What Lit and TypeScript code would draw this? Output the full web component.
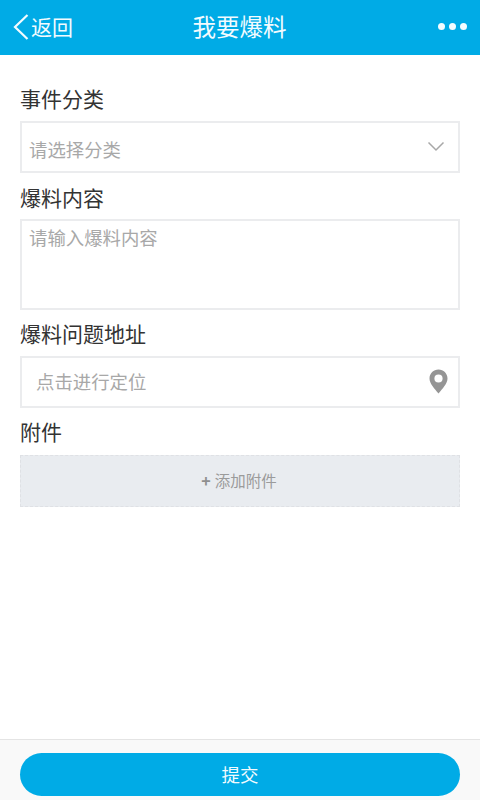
import { LitElement, html, css } from "lit";
import { customElement } from "lit/decorators.js";

@customElement("app-root")
export class AppRoot extends LitElement {
  static styles = css`
    :host {
      display: flex;
      flex-direction: column;
      width: 480px;
      height: 800px;
      background: #fff;
      font-family: "Noto Sans CJK SC", "Noto Sans", sans-serif;
      overflow: hidden;
    }
    .header {
      height: 55px;
      flex: none;
      background: #00abe6;
      color: #f2fbff;
      display: grid;
      grid-template-columns: 1fr auto 1fr;
      align-items: center;
      padding: 0 13px 3px 13px;
      box-sizing: border-box;
    }
    .back {
      display: flex;
      align-items: center;
      font-size: 21px;
      line-height: 28px;
      gap: 1px;
    }
    .back svg { display: block; margin-top: 1px; }
    .title { font-size: 23.5px; line-height: 32px; margin-left: -1px; }
    .more {
      justify-self: end;
      display: flex;
      gap: 4px;
    }
    .more i {
      width: 7px;
      height: 7px;
      border-radius: 50%;
      background: #f4fcff;
    }
    .form {
      flex: 1;
      display: flex;
      flex-direction: column;
      padding: 29px 20px 0;
    }
    .label {
      font-size: 21px;
      line-height: 28px;
      color: #333;
    }
    .label.l1 { margin-bottom: 9px; }
    .label.l2 { margin-top: 10px; margin-bottom: 8px; }
    .label.l3 { margin-top: 9px; margin-bottom: 9px; }
    .label.l4 { margin-top: 9px; margin-bottom: 10px; }
    .box {
      box-sizing: border-box;
      border: 2px solid #ebecee;
      height: 52px;
      display: flex;
      align-items: center;
      justify-content: space-between;
      font-size: 18.4px;
      line-height: 26px;
      color: #a8a8a8;
    }
    .select { padding: 3px 13px 0 7px; }
    .select svg { margin-top: -5px; }
    .area {
      height: 91px;
      align-items: flex-start;
      padding: 3px 7px;
    }
    .loc { padding: 0 10px 2px 14px; }
    .attach {
      box-sizing: border-box;
      height: 52px;
      background: #e9ecf0;
      border: 1px dashed #dfe1e5;
      display: flex;
      align-items: center;
      justify-content: center;
      gap: 4px;
      padding: 0 2px 2px 0;
      font-size: 15.5px;
      color: #9b9b9b;
    }
    .plus { font-weight: 700; font-size: 16px; color: #8f8f8f; }
    .footer {
      flex: none;
      height: 61px;
      box-sizing: border-box;
      background: #f9f9f9;
      border-top: 1px solid #e4e4e4;
      padding: 13px 20px 4px;
    }
    .submit {
      height: 43px;
      border-radius: 22px;
      background: #00abe6;
      color: #f2fbff;
      font-size: 18.5px;
      display: flex;
      align-items: center;
      justify-content: center;
      padding-bottom: 2px;
      box-sizing: border-box;
    }
  `;

  render() {
    return html`
      <div class="header">
        <div class="back">
          <svg width="17" height="28" viewBox="0 0 17 28" fill="none" stroke="#f2fbff" stroke-width="2.2">
            <path d="M14.5 2 2 14 14.5 26" />
          </svg>
          <span>返回</span>
        </div>
        <div class="title">我要爆料</div>
        <div class="more"><i></i><i></i><i></i></div>
      </div>
      <div class="form">
        <div class="label l1">事件分类</div>
        <div class="box select">
          <span>请选择分类</span>
          <svg width="18" height="11" viewBox="0 0 18 11" fill="none" stroke="#a8a8a8" stroke-width="1.5">
            <path d="M1.5 1.5 9 9 16.5 1.5" />
          </svg>
        </div>
        <div class="label l2">爆料内容</div>
        <div class="box area">请输入爆料内容</div>
        <div class="label l3">爆料问题地址</div>
        <div class="box loc">
          <span>点击进行定位</span>
          <svg width="19" height="25" viewBox="0 0 19 25">
            <path fill="#959595" fill-rule="evenodd" d="M9.5 0.5C4.5 0.5 0.5 4.5 0.5 9.4 0.5 14.5 5.5 19.5 9.5 24.5 13.5 19.5 18.5 14.5 18.5 9.4 18.5 4.5 14.5 0.5 9.5 0.5ZM9.5 5.4A4.1 4.1 0 1 1 9.5 13.6 4.1 4.1 0 1 1 9.5 5.4Z" />
          </svg>
        </div>
        <div class="label l4">附件</div>
        <div class="attach"><span class="plus">+</span><span>添加附件</span></div>
      </div>
      <div class="footer">
        <div class="submit">提交</div>
      </div>
    `;
  }
}
